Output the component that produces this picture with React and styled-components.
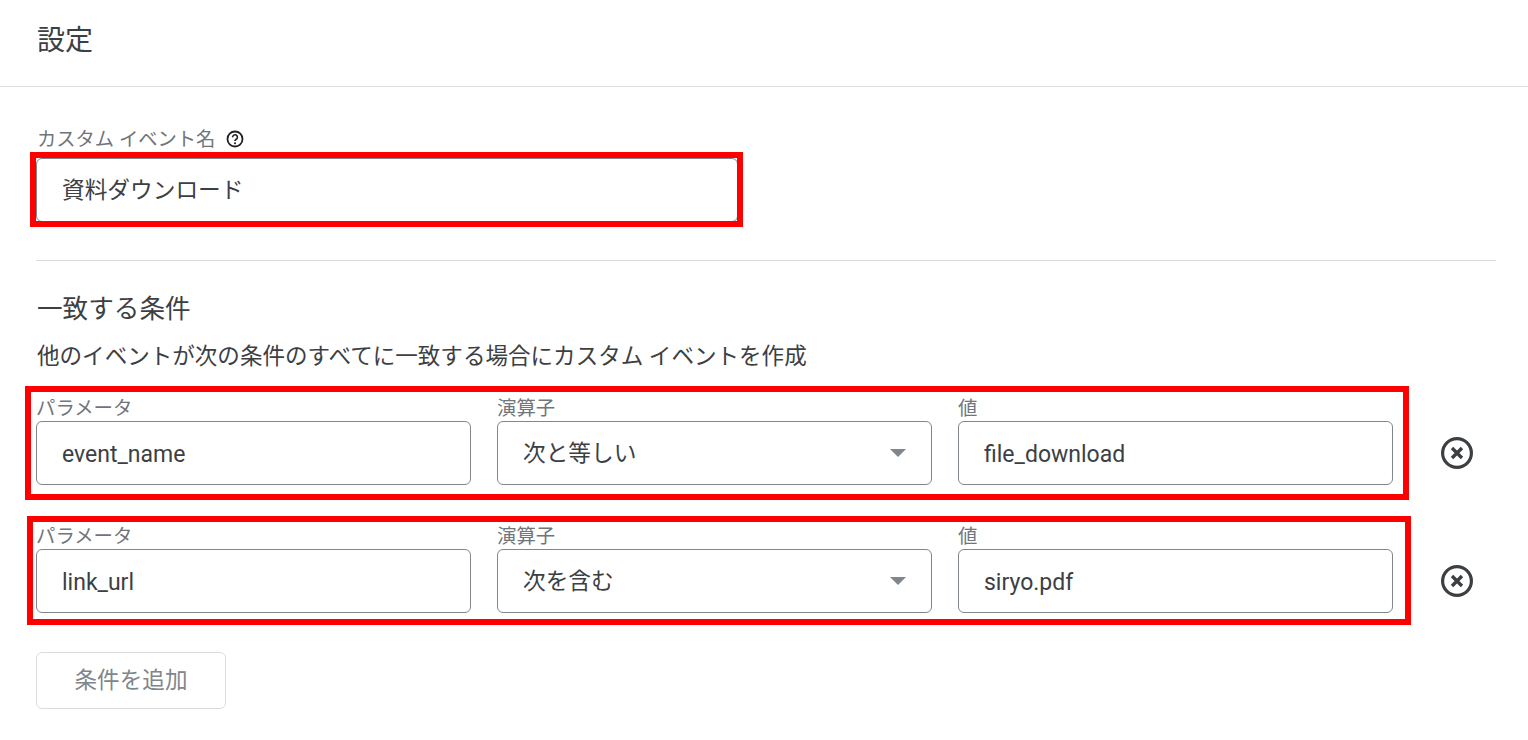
import React from "react";
import styled, { createGlobalStyle } from "styled-components";

const Global = createGlobalStyle`
  html, body { margin: 0; padding: 0; background: #fff; }
  body {
    font-family: Roboto, "Noto Sans CJK JP", sans-serif;
    color: #3c4043;
    overflow: hidden;
  }
`;

const Page = styled.div`
  width: 1528px;
  height: 740px;
  display: flex;
  flex-direction: column;
`;

const Header = styled.header`
  height: 86px;
  border-bottom: 1px solid #dadce0;
  padding-left: 37px;
  display: flex;
  align-items: center;
`;

const Title = styled.h1`
  margin: 0 0 4px;
  font-size: 28px;
  font-weight: 400;
  line-height: 36px;
  color: #3c4043;
`;

const Main = styled.main`
  padding: 39px 32px 0 36px;
  display: flex;
  flex-direction: column;
`;

const NameLabel = styled.div`
  display: flex;
  align-items: center;
  gap: 11px;
  height: 24px;
  margin-bottom: 8px;
  padding-left: 1px;
  font-size: 19.3px;
  color: #70757a;
`;

const Framed = styled.div`
  position: relative;
  width: 702px;
`;

const Highlight = styled.div`
  position: absolute;
  top: ${(p) => p.$top}px;
  left: ${(p) => p.$left}px;
  right: ${(p) => p.$right}px;
  bottom: ${(p) => p.$bottom}px;
  border: 6px solid #ff0000;
  pointer-events: none;
`;

const Box = styled.div`
  box-sizing: border-box;
  height: 64px;
  display: flex;
  align-items: center;
  justify-content: space-between;
  padding: ${(p) => (p.$cjk ? "0 25px 3px" : "2px 25px 0")};
  border: 1px solid #80868b;
  border-radius: 6px;
  font-size: ${(p) => (p.$cjk ? "22.7px" : "23px")};
  color: #3c4043;
  background: #fff;
`;

const Divider = styled.hr`
  margin: 38px 0 0;
  border: 0;
  border-top: 1px solid #dadce0;
  width: 1460px;
`;

const SectionTitle = styled.h2`
  margin: 30px 0 0 1px;
  font-size: 25.6px;
  font-weight: 400;
  line-height: 36px;
  color: #3c4043;
`;

const Description = styled.p`
  margin: 15px 0 0 1px;
  font-size: 22.55px;
  line-height: 30px;
  color: #3c4043;
`;

const Row = styled.div`
  display: flex;
  align-items: flex-end;
  margin-top: ${(p) => p.$top}px;
`;

const Fields = styled.div`
  position: relative;
  display: grid;
  grid-template-columns: repeat(3, 435px);
  column-gap: 26px;
`;

const FieldLabel = styled.div`
  height: 24px;
  font-size: 19.4px;
  line-height: 24px;
  color: #70757a;
`;

const Remove = styled.button`
  width: 32px;
  height: 64px;
  margin-left: 48px;
  padding: 0;
  border: 0;
  background: none;
  display: flex;
  align-items: center;
  justify-content: center;
`;

const AddButton = styled.button`
  box-sizing: border-box;
  width: 190px;
  height: 57px;
  margin-top: 39px;
  padding: 0 0 5px;
  border: 1px solid #dadce0;
  border-radius: 6px;
  background: #fff;
  font: inherit;
  font-size: 22.6px;
  color: #80868b;
`;

const Arrow = styled.span`
  width: 0;
  height: 0;
  margin-top: 3px;
  border-left: 8px solid transparent;
  border-right: 8px solid transparent;
  border-top: 8px solid #80868b;
`;

const HelpIcon = () => (
  <svg width="18" height="18" viewBox="0 0 24 24" fill="none" style={{ marginTop: 1 }}>
    <circle cx="12" cy="12" r="10" stroke="#202124" strokeWidth="2.4" />
    <path d="M8.8 9.6a3.2 3.2 0 1 1 4.9 2.7c-1 .7-1.7 1.2-1.7 2.5" stroke="#202124" strokeWidth="2.2" />
    <circle cx="12" cy="17.6" r="1.4" fill="#202124" />
  </svg>
);

const RemoveIcon = () => (
  <svg width="32" height="32" viewBox="0 0 32 32" fill="none">
    <circle cx="16" cy="16" r="14.4" stroke="#3c4043" strokeWidth="3.2" />
    <path d="M11 11l10 10M21 11L11 21" stroke="#3c4043" strokeWidth="3.4" />
  </svg>
);

const ConditionRow = ({ top, frame, param, op, value }) => (
  <Row $top={top}>
    <Fields>
      <div>
        <FieldLabel>パラメータ</FieldLabel>
        <Box>{param}</Box>
      </div>
      <div>
        <FieldLabel>演算子</FieldLabel>
        <Box $cjk>
          {op}
          <Arrow />
        </Box>
      </div>
      <div>
        <FieldLabel>値</FieldLabel>
        <Box>{value}</Box>
      </div>
      <Highlight $top={frame[0]} $right={frame[1]} $bottom={frame[2]} $left={frame[3]} />
    </Fields>
    <Remove aria-label="削除">
      <RemoveIcon />
    </Remove>
  </Row>
);

export default function App() {
  return (
    <Page>
      <Global />
      <Header>
        <Title>設定</Title>
      </Header>
      <Main>
        <NameLabel>
          カスタム イベント名
          <HelpIcon />
        </NameLabel>
        <Framed>
          <Box $cjk>資料ダウンロード</Box>
          <Highlight $top={-6} $right={-5} $bottom={-5} $left={-6} />
        </Framed>
        <Divider />
        <SectionTitle>一致する条件</SectionTitle>
        <Description>他のイベントが次の条件のすべてに一致する場合にカスタム イベントを作成</Description>
        <ConditionRow
          top={25}
          frame={[-11, -16, -15, -11]}
          param="event_name"
          op="次と等しい"
          value="file_download"
        />
        <ConditionRow
          top={40}
          frame={[-9, -18, -12, -9]}
          param="link_url"
          op="次を含む"
          value="siryo.pdf"
        />
        <AddButton>条件を追加</AddButton>
      </Main>
    </Page>
  );
}
